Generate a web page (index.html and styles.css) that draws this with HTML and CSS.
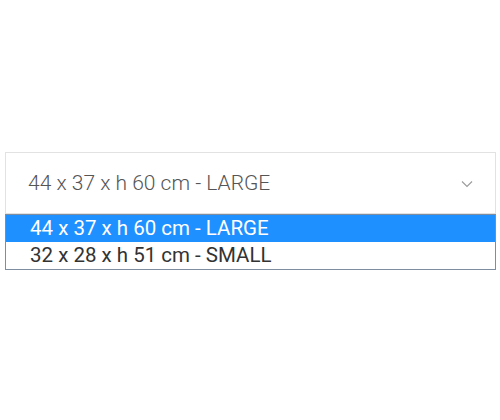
FILE: index.html
```html
<!DOCTYPE html>
<html lang="en">
<head>
  <meta charset="UTF-8" />
  <meta name="viewport" content="width=device-width, initial-scale=1" />
  <title>Size select</title>
  <link rel="stylesheet" href="styles.css">
</head>
<body>
  <div class="field">
    <div class="select-box">
      <span class="select-value">44 x 37 x h 60 cm - LARGE</span>
      <svg class="chevron" width="12" height="8" viewBox="0 0 12 8">
        <path d="M1 1.5 L6 6.5 L11 1.5" fill="none" stroke="#9a9a9a" stroke-width="1.1" />
      </svg>
    </div>
    <ul class="options">
      <li class="option selected">44 x 37 x h 60 cm - LARGE</li>
      <li class="option">32 x 28 x h 51 cm - SMALL</li>
    </ul>
  </div>
</body>
</html>
```
FILE: styles.css
```css
body {
  margin: 0;
  background: #fff;
  font-family: Roboto, "Liberation Sans", sans-serif;
}
.field {
  padding: 152px 4px 0 5px;
}
.select-box {
  height: 60px;
  border: 1px solid #e2e2e2;
  display: flex;
  align-items: center;
  justify-content: space-between;
  padding: 0 22px 0 22px;
}
.select-value {
  font-size: 21px;
  font-weight: 300;
  color: #555;
}
.chevron {
  margin-top: 2px;
}
.options {
  list-style: none;
  margin: 0;
  padding: 0;
  border: 1px solid #7f8da0;
  font-size: 20.5px;
  color: #333;
}
.option {
  height: 27px;
  line-height: 27px;
  padding-left: 24px;
}
.option.selected {
  background: #1e90ff;
  color: #fff;
}
```
